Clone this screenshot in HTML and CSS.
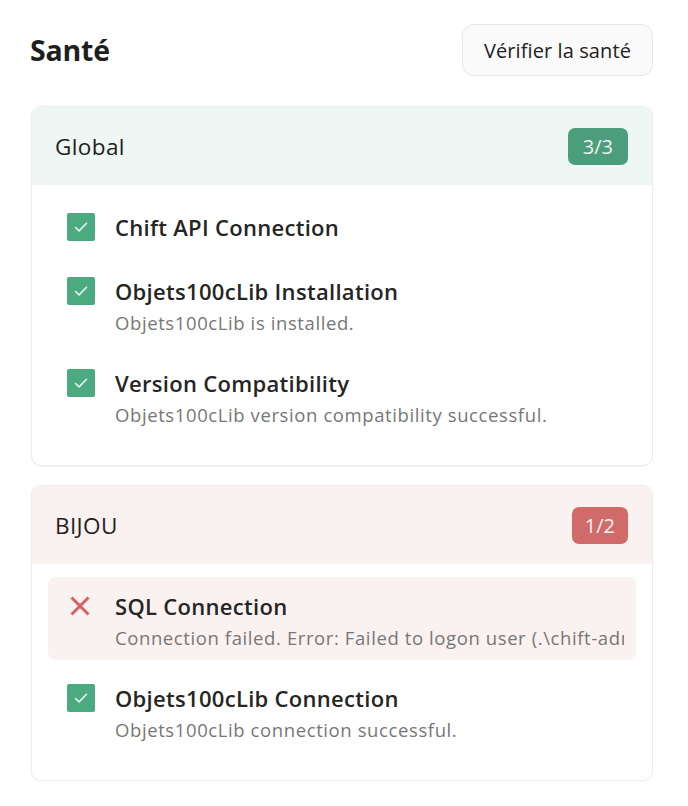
FILE: index.html
```html
<!DOCTYPE html>
<html lang="fr">
<head>
<meta charset="utf-8">
<title>Santé</title>
<link rel="stylesheet" href="styles.css">
</head>
<body>
<div class="page">
  <div class="page-head">
    <h1 class="page-title">Santé</h1>
    <button class="btn">Vérifier la santé</button>
  </div>

  <section class="card">
    <div class="card-head ok">
      <span class="card-name">Global</span>
      <span class="badge ok">3/3</span>
    </div>
    <ul class="list">
      <li class="item">
        <span class="icon check"><svg viewBox="0 0 28 28"><path d="M8.5 14.5l3.6 3.4 7.4-7.6"/></svg></span>
        <div class="text"><div class="title">Chift API Connection</div></div>
      </li>
      <li class="item">
        <span class="icon check"><svg viewBox="0 0 28 28"><path d="M8.5 14.5l3.6 3.4 7.4-7.6"/></svg></span>
        <div class="text"><div class="title">Objets100cLib Installation</div><div class="desc">Objets100cLib is installed.</div></div>
      </li>
      <li class="item">
        <span class="icon check"><svg viewBox="0 0 28 28"><path d="M8.5 14.5l3.6 3.4 7.4-7.6"/></svg></span>
        <div class="text"><div class="title">Version Compatibility</div><div class="desc">Objets100cLib version compatibility successful.</div></div>
      </li>
    </ul>
  </section>

  <section class="card">
    <div class="card-head bad">
      <span class="card-name">BIJOU</span>
      <span class="badge bad">1/2</span>
    </div>
    <ul class="list">
      <li class="item failed">
        <span class="icon cross"><svg viewBox="0 0 28 28"><path d="M4.5 5.5l17 17M21.5 5.5l-17 17"/></svg></span>
        <div class="text"><div class="title">SQL Connection</div><div class="desc clip">Connection failed. Error: Failed to logon user (.\chift-admin)</div></div>
      </li>
      <li class="item">
        <span class="icon check"><svg viewBox="0 0 28 28"><path d="M8.5 14.5l3.6 3.4 7.4-7.6"/></svg></span>
        <div class="text"><div class="title">Objets100cLib Connection</div><div class="desc">Objets100cLib connection successful.</div></div>
      </li>
    </ul>
  </section>
</div>
</body>
</html>
```

FILE: styles.css
```css
* { box-sizing: border-box; }
html, body { margin: 0; padding: 0; background: #ffffff; }
body {
  font-family: "Open Sans", "Noto Sans", "Liberation Sans", sans-serif;
  color: #222222;
}
.page {
  width: 622px;
  margin-left: 31px;
  padding-top: 24px;
  display: flex;
  flex-direction: column;
  gap: 19px;
}
.page-head {
  display: flex;
  justify-content: space-between;
  align-items: center;
  margin-bottom: 11px;
}
.page-title {
  margin: 0 0 0 -1px;
  font-size: 28.5px;
  font-weight: 700;
  color: #1f1f1f;
  letter-spacing: -0.2px;
}
.btn {
  height: 52px;
  padding: 0 21px;
  font-family: inherit;
  font-size: 20px;
  color: #222;
  background: #fafafa;
  border: 1px solid #e6e6e6;
  border-radius: 12px;
  letter-spacing: 0.1px;
}
.card {
  border: 1px solid #ececec;
  border-radius: 10px;
  overflow: hidden;
  box-shadow: 0 1px 2px rgba(0,0,0,0.04);
  background: #fff;
}
.card-head {
  height: 78px;
  display: flex;
  align-items: center;
  justify-content: space-between;
  padding: 0 24px 0 23px;
}
.card-head.ok { background: #eff7f4; }
.card-head.bad { background: #f9f2f1; }
.card-name {
  font-size: 22.5px;
  font-weight: 400;
  color: #222;
  letter-spacing: 0.4px;
}
.badge {
  font-size: 20px;
  color: #f2f2f2;
  border-radius: 7px;
  padding: 0 15px;
  height: 37px;
  line-height: 37px;
}
.badge.ok { background: #4a9e7b; }
.badge.bad { background: #d06b6a; padding: 0 13px; }
.list {
  list-style: none;
  margin: 0;
  padding: 13px 16px 28px;
  display: flex;
  flex-direction: column;
  gap: 9px;
}
.item {
  display: flex;
  align-items: flex-start;
  gap: 20px;
  padding: 14px 19px 11px;
  border-radius: 8px;
}
.item.has-desc { padding-bottom: 9px; }
.item.failed { background: #f9f2f1; padding-right: 12px; }
.icon {
  width: 28px;
  height: 28px;
  margin-top: 1px;
  flex: none;
  display: block;
}
.icon svg { width: 28px; height: 28px; display: block; fill: none; }
.icon.check { background: #4caa80; border-radius: 2px; }
.icon.check svg path { stroke: #e8f5ee; stroke-width: 1.6; stroke-linecap: round; stroke-linejoin: round; }
.icon.cross svg path { stroke: #d5625f; stroke-width: 3; stroke-linecap: butt; }
.text { min-width: 0; flex: 1; }
.title {
  font-size: 22px;
  font-weight: 600;
  line-height: 30px;
  color: #252525;
  letter-spacing: 0.3px;
}
.desc {
  margin-top: 4px;
  margin-bottom: -2px;
  font-size: 18.5px;
  line-height: 26px;
  color: #777;
  letter-spacing: 0.6px;
}
.desc.clip { white-space: nowrap; overflow: hidden; }
```
